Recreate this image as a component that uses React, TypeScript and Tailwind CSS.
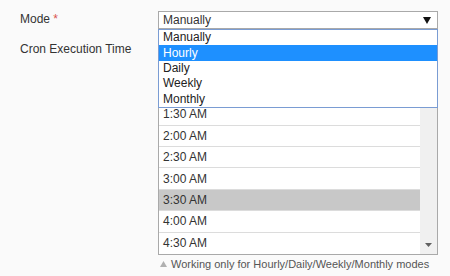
const modes = ["Manually", "Hourly", "Daily", "Weekly", "Monthly"];

const times = [
  "12:00 AM",
  "12:30 AM",
  "1:00 AM",
  "1:30 AM",
  "2:00 AM",
  "2:30 AM",
  "3:00 AM",
  "3:30 AM",
  "4:00 AM",
  "4:30 AM",
];

export default function App() {
  return (
    <div
      className="relative w-[450px] h-[276px] overflow-hidden bg-[#fafafa] text-[12px] text-[#333]"
      style={{ fontFamily: '"Liberation Sans", Arial, sans-serif' }}
    >
      <div className="grid grid-cols-[158px_280px] pt-[11px]">
        {/* Mode */}
        <div className="pl-[20px] leading-[17px]">
          Mode <span className="text-[#d9534f]">*</span>
        </div>
        <div className="relative">
          <div className="flex h-[18px] items-center justify-between border border-[#a9a9a9] bg-white pl-[4px] pr-[6px]">
            <span className="leading-[16px]">Manually</span>
            <svg width="8" height="7" viewBox="0 0 8 7">
              <polygon points="0,0 8,0 4,7" fill="#111" />
            </svg>
          </div>
          {/* open dropdown */}
          <ul className="absolute left-0 top-[18px] z-10 w-[280px] border border-[#7a9cd3] bg-white">
            {modes.map((m) => (
              <li
                key={m}
                className={`flex h-[15.4px] items-center pl-[4px] leading-[15px] ${
                  m === "Hourly" ? "bg-[#1e90ff] text-white" : "text-[#222]"
                }`}
              >
                {m}
              </li>
            ))}
          </ul>
        </div>

        {/* Cron Execution Time */}
        <div className="pl-[20px] pt-[11px] leading-[18px]">Cron Execution Time</div>
        <div className="mt-[10px]">
          <div className="flex border border-[#a9a9a9] bg-white">
            <ul className="w-[261px]">
              {times.map((t, i) => (
                <li
                  key={t}
                  className={`flex h-[21.4px] items-center pl-[4px] ${
                    i < times.length - 1 ? "border-b border-[#dcdcdc]" : ""
                  } ${t === "3:30 AM" ? "bg-[#c8c8c8]" : ""}`}
                >
                  {t}
                </li>
              ))}
            </ul>
            <div className="flex w-[17px] flex-col justify-end bg-[#f0f0f0]">
              <div className="flex h-[17px] items-center justify-center">
                <svg width="7" height="4" viewBox="0 0 7 4">
                  <polygon points="0,0 7,0 3.5,4" fill="#606060" />
                </svg>
              </div>
            </div>
          </div>
          <div className="flex items-center gap-[4px] pl-[2px] pt-[1px] text-[11px] leading-[16px] text-[#555]">
            <svg width="7" height="6" viewBox="0 0 7 6">
              <polygon points="3.5,0 7,6 0,6" fill="#b0b0b0" />
            </svg>
            <span>Working only for Hourly/Daily/Weekly/Monthly modes</span>
          </div>
        </div>
      </div>
    </div>
  );
}
